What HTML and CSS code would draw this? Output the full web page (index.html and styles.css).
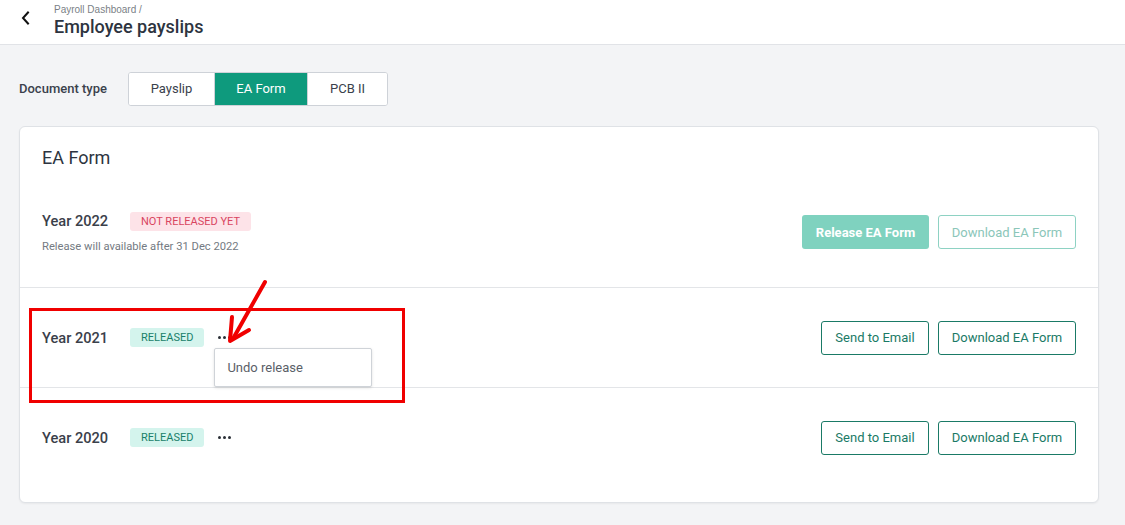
FILE: index.html
```html
<!DOCTYPE html>
<html>
<head>
<meta charset="utf-8">
<link rel="stylesheet" href="styles.css">
</head>
<body>
<header class="topbar">
  <button class="back" aria-label="Back">
    <svg width="12" height="14" viewBox="0 0 12 14"><path d="M8 1.5 L3 7 L8 12.5" fill="none" stroke="#111" stroke-width="2" stroke-linecap="square"/></svg>
  </button>
  <div class="titles">
    <div class="crumb">Payroll Dashboard /</div>
    <h1 class="title">Employee payslips</h1>
  </div>
</header>

<main class="content">
  <div class="doctype">
    <span class="doctype-label">Document type</span>
    <div class="segmented">
      <button class="seg seg-payslip">Payslip</button>
      <button class="seg seg-ea active">EA Form</button>
      <button class="seg seg-pcb">PCB II</button>
    </div>
  </div>

  <section class="card">
    <h2 class="card-title">EA Form</h2>

    <div class="row row-first">
      <div class="row-left">
        <div class="row-line">
          <span class="year">Year 2022</span>
          <span class="badge badge-pending">NOT RELEASED YET</span>
        </div>
        <div class="note">Release will available after 31 Dec 2022</div>
      </div>
      <div class="row-actions">
        <button class="btn btn-fill-disabled">Release EA Form</button>
        <button class="btn btn-outline-disabled btn-download">Download EA Form</button>
      </div>
    </div>

    <div class="row">
      <div class="row-left">
        <div class="row-line">
          <span class="year">Year 2021</span>
          <span class="badge badge-released">RELEASED</span>
          <span class="more-wrap">
            <span class="more"><i></i><i></i><i></i></span>
            <div class="menu">Undo release</div>
          </span>
        </div>
      </div>
      <div class="row-actions">
        <button class="btn btn-outline btn-email">Send to Email</button>
        <button class="btn btn-outline btn-download">Download EA Form</button>
      </div>
    </div>

    <div class="row">
      <div class="row-left">
        <div class="row-line">
          <span class="year">Year 2020</span>
          <span class="badge badge-released">RELEASED</span>
          <span class="more-wrap">
            <span class="more"><i></i><i></i><i></i></span>
          </span>
        </div>
      </div>
      <div class="row-actions">
        <button class="btn btn-outline btn-email">Send to Email</button>
        <button class="btn btn-outline btn-download">Download EA Form</button>
      </div>
    </div>
  </section>
</main>

<div class="annot-box"></div>
<svg class="annot-arrow" width="60" height="70" viewBox="0 0 60 70">
  <path d="M45 3 L14 58" fill="none" stroke="#f00000" stroke-width="4" stroke-linecap="round"/>
  <path d="M12 38 L10 62 L29 51" fill="none" stroke="#f00000" stroke-width="4" stroke-linecap="round" stroke-linejoin="round"/>
</svg>
</body>
</html>
```

FILE: styles.css
```css
* { box-sizing: border-box; }
html, body { margin: 0; padding: 0; }
body {
  background: #f3f4f6;
  font-family: Roboto, "Liberation Sans", Arial, sans-serif;
  color: #2f3742;
  width: 1125px;
  height: 525px;
  overflow: hidden;
  position: relative;
}
button { font-family: inherit; cursor: pointer; }

.topbar {
  height: 45px;
  background: #ffffff;
  border-bottom: 1px solid #e1e3e7;
  display: flex;
  align-items: center;
  padding-left: 19px;
}
.back {
  border: 0;
  background: transparent;
  padding: 0;
  width: 14px;
  height: 16px;
  display: flex;
  align-items: center;
  justify-content: center;
  margin-top: -8px;
}
.titles { margin-left: 21px; margin-top: -3px; }
.crumb {
  font-family: "Liberation Sans", Arial, sans-serif;
  font-size: 10px;
  color: #7b7f86;
  line-height: 12px;
}
.title {
  margin: 0;
  font-size: 18px;
  font-weight: 500;
  line-height: 22px;
  color: #2d3440;
}

.content { padding: 27px 26px 0 19px; }

.doctype { display: flex; align-items: center; height: 33px; }
.doctype-label {
  font-size: 13px;
  font-weight: 500;
  color: #3a414c;
  width: 109px;
}
.segmented {
  display: flex;
  border: 1px solid #ced2d8;
  border-radius: 3px;
  overflow: hidden;
  height: 34px;
  background: #fff;
}
.seg {
  border: 0;
  background: #fff;
  font-size: 13px;
  color: #3a414c;
  height: 100%;
  padding: 0;
}
.seg-payslip { width: 86px; border-right: 1px solid #ced2d8; }
.seg-ea { width: 92px; }
.seg-pcb { width: 80px; border-left: 1px solid #ced2d8; }
.seg.active { background: #0e9a7d; color: #fff; }

.card {
  margin-top: 21px;
  background: #fff;
  border: 1px solid #dfe2e6;
  border-radius: 6px;
  box-shadow: 0 1px 2px rgba(0,0,0,0.05);
  height: 377px;
}
.card-title {
  margin: 0;
  padding: 19px 22px 12px;
  font-size: 18px;
  font-weight: 400;
  line-height: 24px;
  color: #2d3440;
}

.row {
  display: flex;
  align-items: center;
  justify-content: space-between;
  padding: 0 22px;
  height: 100px;
  border-top: 1px solid #e3e5e8;
}
.row-first { border-top: 0; height: 105px; padding-bottom: 5px; }

.row-line { display: flex; align-items: center; }
.year {
  font-size: 14.6px;
  font-weight: 500;
  color: #3a404a;
  width: 88px;
}
.badge {
  font-size: 11px;
  line-height: 19px;
  height: 19px;
  padding: 0 11px;
  border-radius: 3px;
}
.badge-pending { background: #fde3e8; color: #d9455f; }
.badge-released { background: #d4f4ed; color: #18806a; }
.note {
  margin-top: 9px;
  font-size: 11.2px;
  color: #747a82;
}

.more-wrap { position: relative; margin-left: 14px; }
.more { display: flex; gap: 2px; align-items: center; height: 10px; }
.more i {
  display: block;
  width: 3px;
  height: 3px;
  border-radius: 50%;
  background: #2a2f36;
}
.menu {
  position: absolute;
  left: -4px;
  top: 15px;
  width: 158px;
  height: 39px;
  background: #fff;
  border: 1px solid #cfd3d8;
  border-radius: 2px;
  box-shadow: 0 1px 3px rgba(0,0,0,0.12);
  font-size: 13px;
  color: #5a6068;
  padding-left: 12px;
  line-height: 37px;
  z-index: 2;
}

.row-actions { display: flex; gap: 9px; }
.btn {
  height: 34px;
  font-size: 13px;
  border-radius: 3px;
  background: #fff;
  padding: 0;
}
.btn-download { width: 138px; }
.btn-email { width: 108px; }
.btn-outline { border: 1px solid #1a7a66; color: #1a7a66; }
.btn-outline-disabled { border: 1px solid #8ed2c3; color: #8bc6b9; }
.btn-fill-disabled {
  width: 127px;
  border: 0;
  background: #7fd2bf;
  color: #fff;
  font-weight: 700;
}

.annot-box {
  position: absolute;
  left: 29px;
  top: 308px;
  width: 376px;
  height: 95px;
  border: 3px solid #f00000;
  pointer-events: none;
}
.annot-arrow {
  position: absolute;
  left: 220px;
  top: 279px;
  pointer-events: none;
}
```
